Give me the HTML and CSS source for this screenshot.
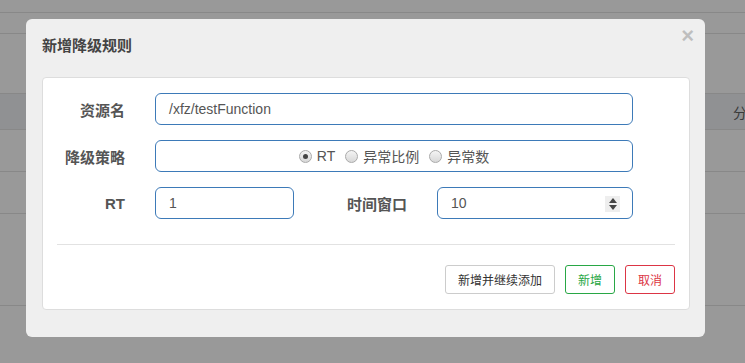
FILE: index.html
```html
<!DOCTYPE html>
<html lang="zh-CN">
<head>
    <meta charset="UTF-8">
    <title>新增降级规则</title>
    <link rel="stylesheet" href="styles.css">
</head>
<body>
    <div class="backdrop">
        <div class="bg-row r1"></div>
        <div class="bg-row r2"></div>
        <div class="bg-row r3"></div>
        <div class="bg-row band"><span class="bg-text">分</span></div>
        <div class="bg-row r5"></div>
        <div class="bg-row r6"></div>
        <div class="bg-row r7"></div>
    </div>

    <div class="modal">
        <div class="modal-header">
            <h3>新增降级规则</h3>
            <span class="close">&times;</span>
        </div>

        <div class="panel">
            <div class="form-row">
                <label class="label">资源名</label>
                <div class="input wide">/xfz/testFunction</div>
            </div>

            <div class="form-row">
                <label class="label">降级策略</label>
                <div class="input wide radios">
                    <span class="radio checked"></span><span class="radio-text">RT</span>
                    <span class="radio"></span><span class="radio-text">异常比例</span>
                    <span class="radio"></span><span class="radio-text">异常数</span>
                </div>
            </div>

            <div class="form-row">
                <label class="label rt">RT</label>
                <div class="input small">1</div>
                <label class="label window">时间窗口</label>
                <div class="input medium number">
                    10
                    <span class="spinner">
                        <span class="up"></span>
                        <span class="down"></span>
                    </span>
                </div>
            </div>

            <hr class="divider">

            <div class="actions">
                <button class="btn">新增并继续添加</button>
                <button class="btn btn-ok">新增</button>
                <button class="btn btn-cancel">取消</button>
            </div>
        </div>
    </div>
</body>
</html>
```

FILE: styles.css
```css
* {
    margin: 0;
    padding: 0;
    box-sizing: border-box;
}

body {
    background: #999;
    font-family: "Liberation Sans", "Noto Sans CJK SC", sans-serif;
    width: 745px;
    height: 363px;
    overflow: hidden;
    position: relative;
}

/* page behind the overlay */
.bg-row {
    border-bottom: 1px solid #888;
}
.r1 { height: 13px; }
.r2 { height: 21px; }
.r3 { height: 60px; }
.band {
    height: 36px;
    background: #909193;
    position: relative;
}
.r5 { height: 42px; }
.r6 { height: 42px; }
.r7 { height: 92px; }

.bg-text {
    position: absolute;
    left: 733px;
    top: 8px;
    font-size: 14px;
    color: #3a3a3a;
}

/* dialog */
.modal {
    position: absolute;
    left: 26px;
    top: 19px;
    width: 679px;
    height: 318px;
    background: #efefef;
    border-radius: 6px;
}

.modal-header {
    height: 58px;
    padding: 17px 16px 0;
    position: relative;
}

.modal-header h3 {
    font-size: 15px;
    line-height: 20px;
    font-weight: bold;
    color: #444;
}

.close {
    position: absolute;
    right: 11px;
    top: 5px;
    font-size: 22px;
    font-weight: bold;
    color: #000;
    opacity: .2;
    line-height: 24px;
}

.panel {
    margin: 0 15px 0 16px;
    background: #fff;
    border: 1px solid #ddd;
    border-radius: 4px;
    padding: 15px 14px;
}

.form-row {
    display: flex;
    align-items: center;
    height: 32px;
    margin-bottom: 15px;
}

.form-row:last-of-type {
    margin-bottom: 0;
}

.label {
    width: 68px;
    margin-right: 30px;
    text-align: right;
    font-size: 15px;
    font-weight: bold;
    color: #555;
}

.label.window {
    width: 113px;
}

.input {
    height: 32px;
    border: 1px solid #3d7ab8;
    border-radius: 6px;
    padding: 0 13px;
    font-size: 14px;
    color: #555;
    display: flex;
    align-items: center;
}

.input.wide { width: 478px; }
.input.small { width: 139px; }
.input.medium { width: 196px; position: relative; }

.radios {
    justify-content: center;
    font-size: 14px;
}

.radio {
    width: 13px;
    height: 13px;
    border-radius: 50%;
    border: 1px solid #aaa;
    background: linear-gradient(#f4f4f4, #d8d8d8);
    margin-right: 5px;
    position: relative;
}

.radio.checked:after {
    content: '';
    position: absolute;
    left: 3px;
    top: 3px;
    width: 5px;
    height: 5px;
    border-radius: 50%;
    background: #444;
}

.radio-text {
    margin-right: 10px;
}

.radio-text:last-child {
    margin-right: 0;
}

.spinner {
    position: absolute;
    right: 12px;
    top: 8px;
    width: 15px;
    height: 16px;
    background: #eee;
    display: flex;
    flex-direction: column;
    align-items: center;
    justify-content: center;
    gap: 2px;
}

.spinner .up {
    border-left: 4px solid transparent;
    border-right: 4px solid transparent;
    border-bottom: 5px solid #444;
}

.spinner .down {
    border-left: 4px solid transparent;
    border-right: 4px solid transparent;
    border-top: 5px solid #444;
}

.divider {
    border: 0;
    border-top: 1px solid #e2e2e2;
    margin: 25px 0 20px;
}

.actions {
    display: flex;
    justify-content: flex-end;
    gap: 10px;
}

.btn {
    height: 29px;
    width: 50px;
    background: #fff;
    border: 1px solid #ccc;
    border-radius: 3px;
    font-family: "Liberation Sans", "Noto Sans CJK SC", sans-serif;
    font-size: 12px;
    color: #333;
}

.btn:first-child {
    width: 110px;
}

.btn-ok {
    border-color: #28a745;
    color: #28a745;
}

.btn-cancel {
    border-color: #dc3545;
    color: #dc3545;
}
```
